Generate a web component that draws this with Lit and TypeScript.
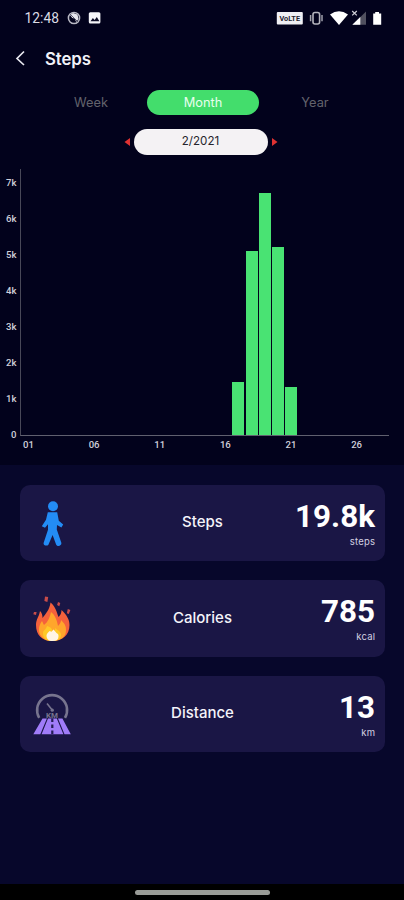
import { LitElement, html, css, svg } from "lit";
import { customElement, property } from "lit/decorators.js";
import { styleMap } from "lit/directives/style-map.js";

const DAYS = 28;
const PX_PER_K = 36;
const STEPS: Record<number, number> = { 17: 1.46, 18: 5.11, 19: 6.71, 20: 5.21, 21: 1.34 };

@customElement("status-bar")
class StatusBar extends LitElement {
  static styles = css`
    :host { display: block; height: 36px; }
    svg { display: block; }
    .clock { font: 400 13.8px Roboto, sans-serif; fill: #dcdce4; }
    .volte { font: 700 6.5px Roboto, sans-serif; fill: #22222e; }
  `;
  render() {
    return html`<svg width="404" height="36" viewBox="0 0 404 36">
      <text class="clock" x="24.5" y="22.6" textLength="34.5">12:48</text>
      <circle cx="74" cy="18" r="5.6" fill="none" stroke="#b9b9c4" stroke-width="1.5" />
      <path d="M70 15l3-2 4.500 1.500 1 4.500-2.300 3-1.600-3.400-2.300-.6z" fill="#e6e6ee" />
      <path d="M69.500 13.500l9 9" stroke="#55556a" stroke-width="1" />
      <rect x="88.800" y="12.200" width="11.600" height="11.200" rx="1.500" fill="#f4f4f8" />
      <path d="M90.500 21.200l2.400-3.100 1.700 1.800 2.200-2.800 2.600 4.100z" fill="#0c0c26" />
      <rect x="276.800" y="12" width="26" height="12.600" rx="1" fill="#efeff4" />
      <text class="volte" x="279.500" y="20.600" textLength="20.500" lengthAdjust="spacingAndGlyphs">VoLTE</text>
      <rect x="313" y="12.500" width="6.600" height="11.500" rx="2" fill="none" stroke="#b4b4bd" stroke-width="1.600" />
      <path d="M310.600 15v6.200M322 15v6.200" stroke="#a0a0aa" stroke-width="1.500" />
      <path d="M330 14.600q9-6.600 18 0L339 25z" fill="#fff" />
      <path d="M352.200 11l4.600 4.400m0-4.400l-4.600 4.400" stroke="#d0d0d8" stroke-width="1.200" />
      <path d="M366 11.500v13.200h-13.500z" fill="#50505f" />
      <path d="M360.300 17v7.700h-8z" fill="#fff" />
      <path d="M373.200 13.400h2v-1.500h3.800v1.500h2.200v11.400h-8z" fill="#fff" />
    </svg>`;
  }
}

@customElement("steps-chart")
class StepsChart extends LitElement {
  static styles = css`
    :host { display: grid; grid-template-columns: 20px 369px; grid-template-rows: 267px 20px; font: 500 9.6px Roboto, sans-serif; color: #d0d0da; }
    .scale { display: flex; flex-direction: column; justify-content: flex-end; margin-bottom: -17px; }
    .tick { height: 36px; line-height: 36px; text-align: right; padding-right: 3.500px; }
    .plot { display: grid; grid-template-columns: repeat(28, 13.140px); align-items: end; box-sizing: border-box; border-left: 1px solid #484858; border-bottom: 1px solid #60606f; }
    .bar { background: #49e373; margin-left: 1.400px; margin-right: -.3px; }
    .days { grid-column: 2; display: grid; grid-template-columns: repeat(28, 13.140px); padding-left: 1.900px; }
    .day { display: flex; justify-content: center; line-height: 18px; white-space: nowrap; min-width: 0; }
  `;
  render() {
    const days = Array.from({ length: DAYS }, (_, i) => i + 1);
    return html`
      <div class="scale">${[7, 6, 5, 4, 3, 2, 1, 0].map((k) => html`<div class="tick">${k ? `${k}k` : "0"}</div>`)}</div>
      <div class="plot">${days.map((d) => html`<div class="bar" style=${styleMap({ height: `${(STEPS[d] ?? 0) * PX_PER_K}px` })}></div>`)}</div>
      <div class="days">${days.map((d) => html`<div class="day">${d % 5 === 1 ? String(d).padStart(2, "0") : ""}</div>`)}</div>
    `;
  }
}

const walker = svg`
  <circle cx="33" cy="21.200" r="5" fill="#238cf5" />
  <path fill="#238cf5" d="M27.800 27.300h9.400l1.600 8.400 4.400 3.900-1.800 3-4.400-2.500-.2 4.400 4.600 13.600c.3 3-4 3.800-5.200 1.600L32.600 50l-4.200 9.800c-1.600 1.800-5.400.4-4.800-1.900l4.400-13.200v-5.500l-3 3.600-3.200-1.500 4.200-6.600z" />`;

const flame = svg`
  <path fill="#f4613c" d="M32 61c-10 0-16-6-16-16 0-6 3-8 4-14 2 2 2.500 4 2.500 7 3-4 7-8 8-15.500 5 4 6 9 8 14.500 2-2 3-4 3-7 5 5 8 9 8 15 0 10-7 16-17.500 16z" />
  <path fill="#ffa62b" d="M32 61c-8 0-13-5-13-11 0-4 1-6 3-9 1 2 1.500 3 2 4 4-3 6-8 7-13 4 3 6 8 7 14 2-2 3-4 3-6 4 4 5 6 5 10 0 7-5 11-14 11z" />
  <path fill="#ffc928" d="M32 61c-6 0-9-3-9-8 0-3 3-3 4-7 4 1 5 3 6 6 2-1 2-2 2-4 4 3 6 4 6 7 0 4-4 6-9 6z" />
  <path fill="#fff5e5" d="M32.500 61c-4 0-6-2-6-5.500 0-2 2-3 3-4.500l2 .8 2-2.300 3 3.500c2 1 2 2 2 3.500 0 3-2 4.500-6 4.500z" />
  <path fill="#c84c4a" d="M25 16.500l3.200.5-.8 5-3-1zM38 22l2.300 1-1 3.200-2.200-1.200zM47.800 29l2.600 1-1.600 4-2-.8zM14 32h2.600l-.6 3-2.700-.8z" />`;

const road = svg`
  <path fill="none" stroke="#77748e" stroke-width="2.600" d="M19.200 41.800A15 15 0 1 1 45 41.800" />
  <path d="M27 27.500l5.200 6.500" stroke="#77748e" stroke-width="1.600" />
  <circle cx="32.300" cy="34.200" r="1.600" fill="#77748e" />
  <text class="km" x="26" y="41.800" textLength="12" lengthAdjust="spacingAndGlyphs">KM</text>
  <path fill="#a07cf8" d="M22.500 42.500h4.400L20.300 58.300h-7zM28 42.500h8.800l6.600 15.800H21.600zM38 42.500h4.400l8.400 15.800h-6.300z" />
  <path d="M32.300 42.500v16" stroke="#241c55" stroke-width="2.200" stroke-dasharray="3.500 2.500" />`;

const ICONS = { walker, flame, road };

@customElement("stat-card")
class StatCard extends LitElement {
  @property() icon: keyof typeof ICONS = "walker";
  @property() label = "";
  @property() value = "";
  @property() unit = "";
  static styles = css`
    :host { display: grid; grid-template-columns: 80px 1fr 80px; align-items: center; height: 76.500px; box-sizing: border-box; padding-right: 10px; border-radius: 10px; background: #1a1645; color: #f4f4fa; }
    svg { display: block; width: 80px; height: 76px; }
    .km { font: 700 8px Roboto, sans-serif; fill: #77748e; }
    .label { text-align: center; font: 500 15px Inter, sans-serif; margin-left: 10px; margin-top: -2px; }
    .reading { display: flex; flex-direction: column; align-items: flex-end; padding-top: 2px; }
    .value { font: 700 31.400px/34px Roboto, sans-serif; color: #fff; white-space: nowrap; }
    .unit { font: 400 9.500px/13px Inter, sans-serif; letter-spacing: .2px; margin: 1px -.2px 0 0; color: #d2d0e0; }
  `;
  render() {
    return html`
      <svg viewBox="0 0 80 76">${ICONS[this.icon]}</svg>
      <div class="label">${this.label}</div>
      <div class="reading"><div class="value">${this.value}</div><div class="unit">${this.unit}</div></div>
    `;
  }
}

@customElement("app-root")
class AppRoot extends LitElement {
  static styles = css`
    :host { display: flex; flex-direction: column; height: 900px; width: 404px; overflow: hidden; background: #07072b; font-family: Inter, sans-serif; color: #fff; }
    .top { height: 465px; background: #02021c; }
    header { display: flex; align-items: center; height: 45px; padding-left: 15px; }
    .back { display: block; width: 12px; height: 18px; }
    h1 { margin: 0 0 0 18px; font: 600 16.800px Inter, sans-serif; letter-spacing: -.1px; color: #f2f2f8; }
    .tabs { display: grid; grid-template-columns: repeat(3, 112px); justify-content: center; height: 25px; margin-top: 9px; padding-left: 2px; }
    .tab { display: grid; place-items: center; border-radius: 13px; font-size: 12.800px; color: #62626c; }
    .tab.on { background: #43dd6c; color: #e8ffee; }
    .picker { display: flex; align-items: center; justify-content: center; gap: 4px; height: 26px; margin: 14px 0; padding-right: 3px; }
    .date { width: 134px; height: 26px; line-height: 25px; box-sizing: border-box; border-radius: 13px; background: #f4f2f4; color: #25252c; text-align: center; font-size: 11.600px; }
    .cards { display: flex; flex-direction: column; gap: 19px; padding: 19.500px 19px 0 20px; flex: 1; }
    .nav { height: 16px; background: #000; display: flex; justify-content: center; }
    .handle { width: 135px; height: 4.500px; margin-top: 6px; border-radius: 3px; background: #9a9c98; }
  `;
  render() {
    return html`
      <section class="top">
        <status-bar></status-bar>
        <header>
          <svg class="back" viewBox="0 0 12 18"><path d="M9 1.500L2 8.500l7 6.500" fill="none" stroke="#e8e8f0" stroke-width="1.700" /></svg>
          <h1>Steps</h1>
        </header>
        <nav class="tabs"><div class="tab">Week</div><div class="tab on">Month</div><div class="tab">Year</div></nav>
        <div class="picker">
          <svg width="6" height="10" viewBox="0 0 6 10"><path d="M6 1v8L.5 5z" fill="#e03232" /></svg>
          <div class="date">2/2021</div>
          <svg width="6" height="10" viewBox="0 0 6 10"><path d="M0 1v8l5.500-4z" fill="#e03232" /></svg>
        </div>
        <steps-chart></steps-chart>
      </section>
      <main class="cards">
        <stat-card icon="walker" label="Steps" value="19.8k" unit="steps"></stat-card>
        <stat-card icon="flame" label="Calories" value="785" unit="kcal"></stat-card>
        <stat-card icon="road" label="Distance" value="13" unit="km"></stat-card>
      </main>
      <div class="nav"><div class="handle"></div></div>
    `;
  }
}
